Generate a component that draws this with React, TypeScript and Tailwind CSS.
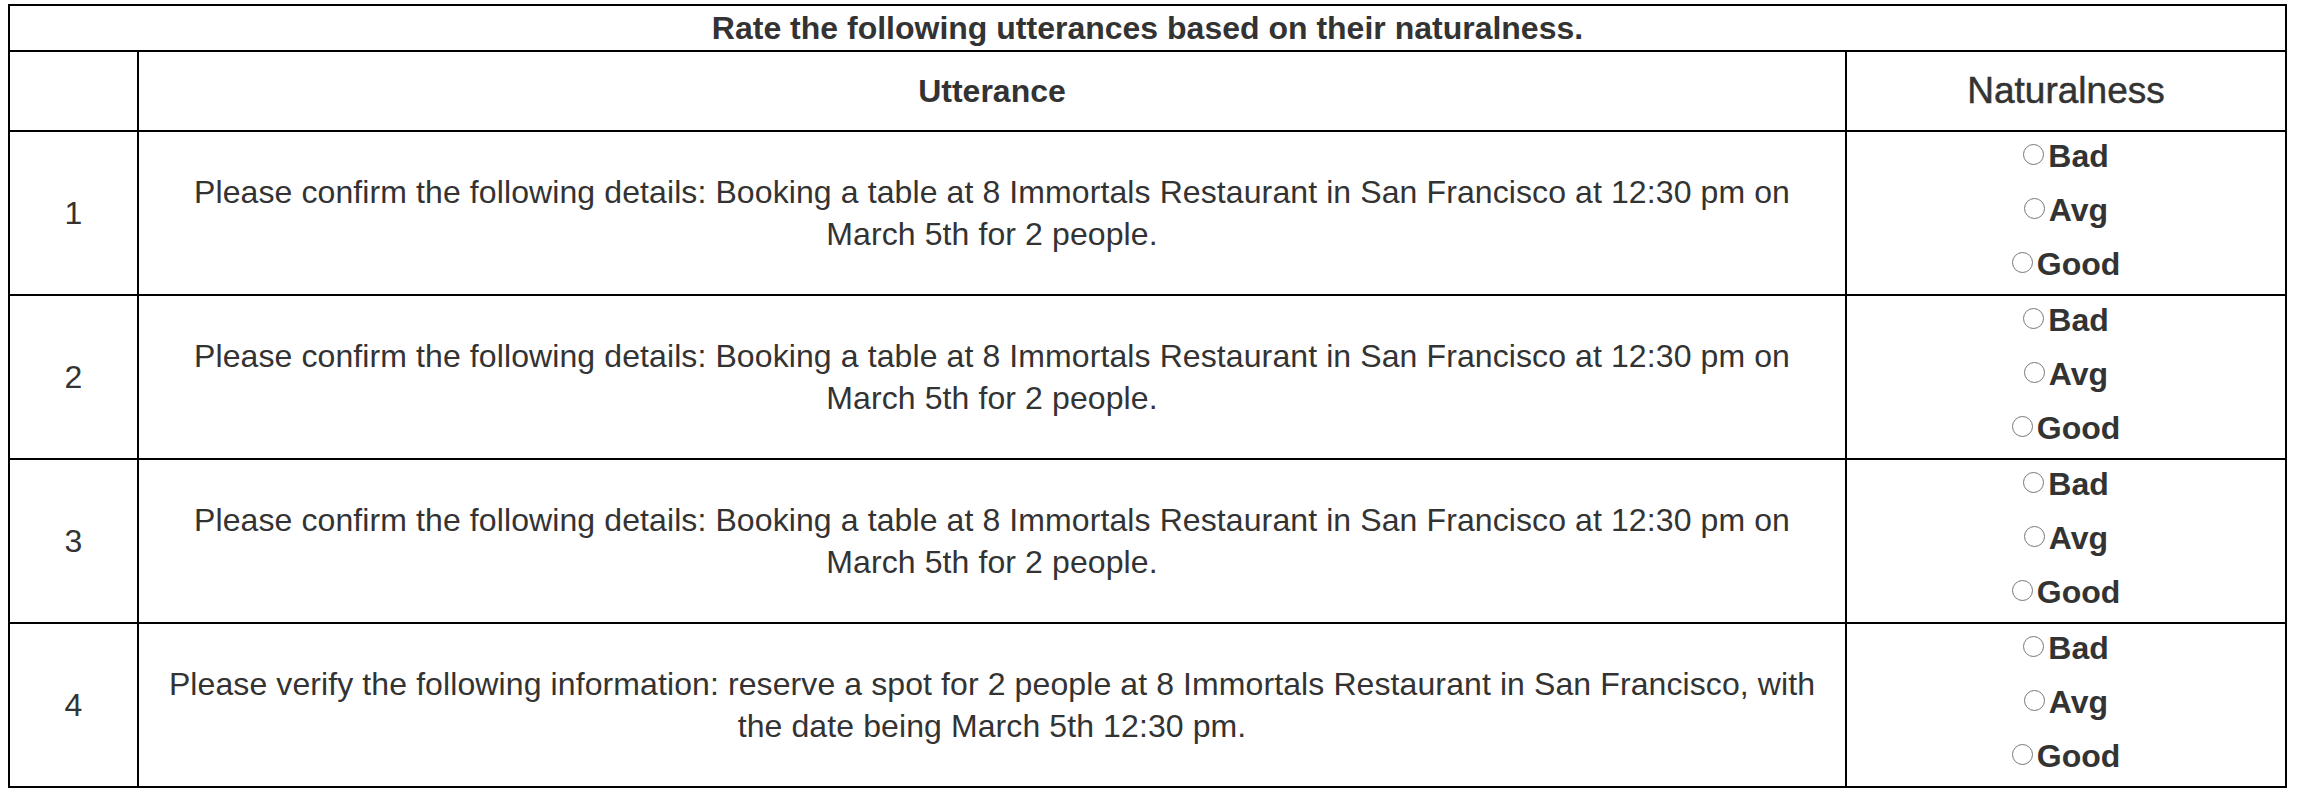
import React from "react";

const utterances = [
	"Please confirm the following details: Booking a table at 8 Immortals Restaurant in San Francisco at 12:30 pm on March 5th for 2 people.",
	"Please confirm the following details: Booking a table at 8 Immortals Restaurant in San Francisco at 12:30 pm on March 5th for 2 people.",
	"Please confirm the following details: Booking a table at 8 Immortals Restaurant in San Francisco at 12:30 pm on March 5th for 2 people.",
	"Please verify the following information: reserve a spot for 2 people at 8 Immortals Restaurant in San Francisco, with the date being March 5th 12:30 pm.",
];

const options = ["Bad", "Avg", "Good"];

const RatingCell: React.FC<{ row: number }> = ({ row }) => {
	return (
		<div className="bg-white flex flex-col">
			{options.map((opt) => (
				<label
					key={opt}
					className="h-[54px] pb-[7px] flex items-center justify-center text-[32px] font-bold text-[#333]"
				>
					<input type="radio" name={`rating-${row}`} value={opt} className="sr-only" />
					<span className="inline-block shrink-0 mr-[4px] mb-[2px] w-[21px] h-[21px] rounded-full border-[1.5px] border-solid border-[#777] bg-white" />
					{opt}
				</label>
			))}
		</div>
	);
};

export default function App() {
	return (
		<div className="min-h-screen bg-white pt-[4px] pl-[8px] font-['Liberation_Sans',Arial,sans-serif] text-[#333]">
			<div className="w-[2279px] grid grid-cols-[127px_1706px_438px] gap-[2px] p-[2px] bg-black">
				{/* title */}
				<div className="col-span-3 h-[44px] bg-white flex items-center justify-center text-[32px] font-bold">
					Rate the following utterances based on their naturalness.
				</div>

				{/* header */}
				<div className="h-[78px] bg-white" />
				<div className="h-[78px] bg-white flex items-center justify-center text-[32px] font-bold">
					Utterance
				</div>
				<div className="h-[78px] bg-white flex items-center justify-center text-[37px] [-webkit-text-stroke:0.5px_#333]">
					Naturalness
				</div>

				{utterances.map((text, i) => (
					<React.Fragment key={i}>
						<div className="bg-white flex items-center justify-center text-[32px]">
							{i + 1}
						</div>
						<div className="bg-white flex items-center justify-center px-4 text-center text-[32px] leading-[42px] tracking-[0.1px]">
							{text}
						</div>
						<RatingCell row={i + 1} />
					</React.Fragment>
				))}
			</div>
		</div>
	);
}
